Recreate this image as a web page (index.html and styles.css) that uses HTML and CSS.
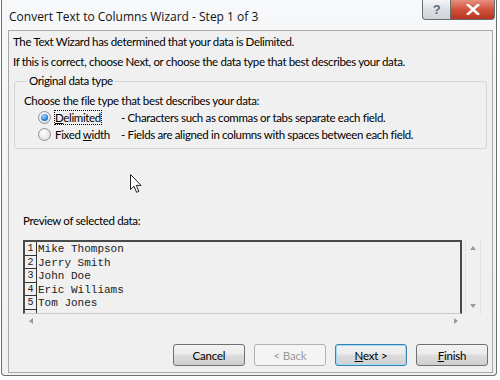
FILE: index.html
```html
<!DOCTYPE html>
<html lang="en">
<head>
  <meta charset="UTF-8">
  <title>Convert Text to Columns Wizard - Step 1 of 3</title>
  <link rel="stylesheet" href="styles.css">
</head>
<body>

<div class="window">
  <div class="titlebar">
    <div class="title">Convert Text to Columns Wizard - Step 1 of 3</div>
    <div class="caption-btns">
      <div class="cap help">?</div>
      <div class="cap close">
        <svg width="14" height="11" viewBox="0 0 14 11">
          <path d="M2 1 L12 10 M12 1 L2 10" stroke="#fff" stroke-width="2.6" stroke-linecap="square"/>
        </svg>
      </div>
    </div>
  </div>

  <div class="client">
    <p class="intro">The Text Wizard has determined that your data is Delimited.</p>
    <p class="intro">If this is correct, choose Next, or choose the data type that best describes your data.</p>

    <fieldset class="group">
      <legend>Original data type</legend>
      <div class="line">Choose the file type that best describes your data:</div>
      <div class="line option">
        <span class="radio checked"></span>
        <span class="opt-label"><span class="focus"><u>D</u>elimited</span></span>
        <span>- Characters such as commas or tabs separate each field.</span>
      </div>
      <div class="line option">
        <span class="radio"></span>
        <span class="opt-label">Fixed <u>w</u>idth</span>
        <span>- Fields are aligned in columns with spaces between each field.</span>
      </div>
    </fieldset>

    <div class="preview-label">Preview of selected data:</div>

    <div class="preview">
      <div class="preview-top">
        <div class="data">
          <div class="row"><span class="num">1</span>Mike Thompson</div>
          <div class="row"><span class="num">2</span>Jerry Smith</div>
          <div class="row"><span class="num">3</span>John Doe</div>
          <div class="row"><span class="num">4</span>Eric Williams</div>
          <div class="row"><span class="num">5</span>Tom Jones</div>
          <div class="row"><span class="num"></span></div>
        </div>
        <div class="vscroll">
          <span class="arrow up"></span>
          <span class="arrow down"></span>
        </div>
      </div>
      <div class="hscroll">
        <span class="arrow left"></span>
        <span class="arrow right"></span>
      </div>
    </div>

    <div class="buttons">
      <button class="btn">Cancel</button>
      <button class="btn disabled">&lt; Back</button>
      <button class="btn default"><u>N</u>ext &gt;</button>
      <button class="btn"><u>F</u>inish</button>
    </div>

    <svg class="cursor" width="13" height="20" viewBox="0 0 13 20">
      <path d="M0.5 0.5 L0.5 15.5 L4 12.2 L6.6 18.3 L8.8 17.4 L6.3 11.4 L11 11.4 Z" fill="#fff" stroke="#222" stroke-width="1"/>
    </svg>
  </div>
</div>

</body>
</html>
```

FILE: styles.css
```css
body {
  margin: 0;
  background: #fff;
  font-family: Lato, "Liberation Sans", sans-serif;
  font-size: 11.5px;
  letter-spacing: -0.35px;
  color: #000;
}

.window {
  width: 494px;
  height: 375px;
  margin-left: 1px;
  border: 1px solid #6e6e6e;
  border-top: none;
  border-radius: 0 0 4px 4px;
  background: linear-gradient(#f6f8fa, #eef1f4);
  display: flex;
  flex-direction: column;
}

.titlebar {
  height: 30px;
  display: flex;
  align-items: flex-start;
}

.title {
  padding: 8px 0 0 7px;
  font-family: "Open Sans", "Liberation Sans", sans-serif;
  font-size: 12px;
  letter-spacing: 0;
  color: #111;
}

.caption-btns {
  margin-left: auto;
  margin-right: 1px;
  display: flex;
}

.cap {
  height: 19px;
  border: 1px solid #6c6c6c;
  border-top: none;
  display: flex;
  align-items: center;
  justify-content: center;
}

.help {
  width: 27px;
  border-right: none;
  border-radius: 0 0 0 4px;
  background: linear-gradient(#f4f5f7, #dcdfe3 50%, #cfd3d8);
  color: #5a6d86;
  font-family: "Liberation Sans", sans-serif;
  font-weight: bold;
  font-size: 13px;
}

.close {
  width: 43px;
  border-radius: 0 0 4px 0;
  background: linear-gradient(#e5907f, #d0533d 50%, #b83420);
}

.client {
  flex: 1;
  margin: 0 3px 2px 6px;
  border: 1px solid #a9a9a9;
  background: #f0f0f0;
  padding: 1px 4px 6px 4px;
  display: flex;
  flex-direction: column;
  position: relative;
}

.intro {
  margin: 0;
  line-height: 20px;
}

.group {
  margin: 2px 1px 0 1px;
  padding: 4px 8px 5px 9px;
  border: 1px solid #d6d6d6;
  border-radius: 3px;
}

.group legend {
  padding: 0 2px;
  margin-left: 3px;
  line-height: 14px;
}

.line {
  line-height: 17px;
  white-space: nowrap;
}

.option {
  display: flex;
  align-items: center;
  padding-left: 14px;
}

.radio {
  width: 11px;
  height: 11px;
  border: 1px solid #8d9095;
  border-radius: 50%;
  background: radial-gradient(circle at 40% 35%, #fff, #e2e3e5 70%, #cfd1d4);
  margin-right: 4px;
  position: relative;
}

.radio.checked::after {
  content: "";
  position: absolute;
  left: 2px;
  top: 2px;
  width: 7px;
  height: 7px;
  border-radius: 50%;
  background: radial-gradient(circle at 40% 35%, #a9dcff, #2c7bd6 60%, #1b4f9c);
}

.opt-label {
  width: 66px;
}

.focus {
  outline: 1px dotted #000;
  outline-offset: 0;
}

.preview-label {
  margin: 64px 0 0 10px;
  line-height: 16px;
}

.preview {
  margin: 11px 0 0 10px;
  width: 458px;
}

.preview-top {
  display: flex;
}

.data {
  width: 437px;
  height: 71px;
  border: 2px solid #4a4a4a;
  border-bottom: 1px solid #c9c9c9;
  overflow: hidden;
  font-family: "Liberation Mono", "Courier New", monospace;
  font-size: 11px;
  letter-spacing: 0;
  color: #222;
}

.row {
  height: 13.5px;
  line-height: 14px;
  display: flex;
  white-space: pre;
}

.num {
  width: 12px;
  flex: none;
  box-sizing: border-box;
  border-right: 1px solid #333;
  border-bottom: 1px solid #333;
  text-align: center;
  font-size: 10px;
  margin-right: 1px;
}

.vscroll {
  width: 14px;
  margin-left: 3px;
  border-left: 1px solid #e2e2e2;
  border-right: 1px solid #e2e2e2;
  display: flex;
  flex-direction: column;
  justify-content: space-between;
  align-items: center;
  padding: 6px 0 6px;
}

.hscroll {
  width: 441px;
  height: 13px;
  display: flex;
  justify-content: space-between;
  align-items: center;
  padding: 0 6px;
  box-sizing: border-box;
}

.arrow {
  width: 0;
  height: 0;
  border: 3px solid transparent;
}

.up { border-bottom: 4px solid #9a9a9a; border-top: none; }
.down { border-top: 4px solid #9a9a9a; border-bottom: none; }
.left { border-right: 4px solid #9a9a9a; border-left: none; }
.right { border-left: 4px solid #9a9a9a; border-right: none; }

.buttons {
  margin-top: auto;
  display: flex;
  justify-content: flex-end;
  gap: 9px;
}

.btn {
  width: 72px;
  height: 22px;
  border: 1px solid #707070;
  border-radius: 3px;
  background: linear-gradient(#f2f2f2, #ebebeb 45%, #dddddd 50%, #cfcfcf);
  font-family: Lato, "Liberation Sans", sans-serif;
  font-size: 11.5px;
  letter-spacing: -0.2px;
  color: #000;
  padding: 0;
}

.btn.disabled {
  border-color: #adb2b5;
  background: #f4f4f4;
  color: #9a9a9a;
}

.btn.default {
  border-color: #3c7fb1;
  box-shadow: inset 0 0 0 1px #9fdcf5;
}

.cursor {
  position: absolute;
  left: 121px;
  top: 143px;
}
```
